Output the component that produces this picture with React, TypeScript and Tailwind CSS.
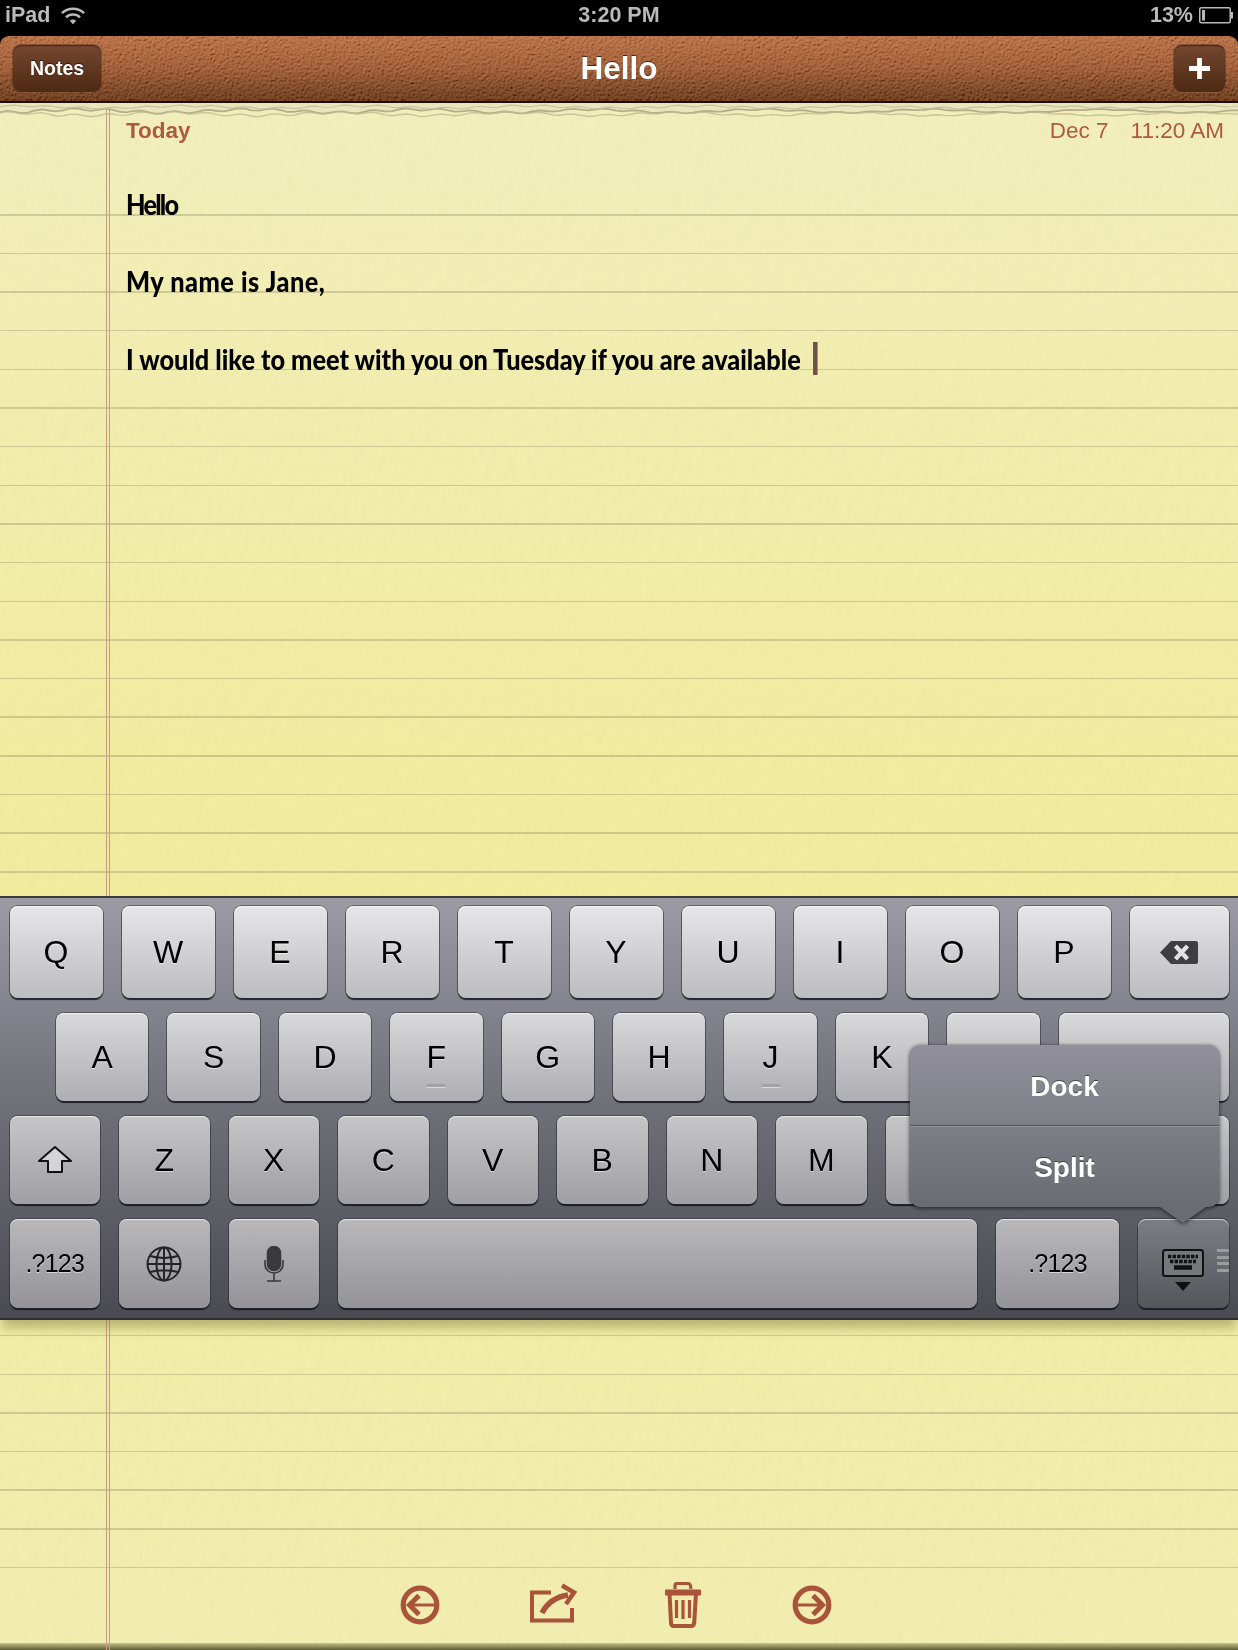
const keyTones = {
  first: "bg-gradient-to-b from-[#e6e6e8] to-[#bcbcc1]",
  second: "bg-gradient-to-b from-[#d9d9db] to-[#aeaeb3]",
  third: "bg-gradient-to-b from-[#c6c6c8] to-[#9f9fa4]",
  fourth: "bg-gradient-to-b from-[#b9b9bc] to-[#939398]",
  active: "bg-gradient-to-b from-[#7d7d85] to-[#55565c]",
};

type Tone = keyof typeof keyTones;

function Key({
  tone,
  className = "",
  children,
}: {
  tone: Tone;
  className?: string;
  children?: React.ReactNode;
}) {
  return (
    <div
      className={`relative flex items-center justify-center rounded-[8px] text-black [text-shadow:0_1px_0_rgba(255,255,255,0.55)] shadow-[inset_0_1px_0_rgba(255,255,255,0.65),0_0_0_1px_rgba(40,40,50,0.5),0_2px_1px_rgba(15,15,25,0.85)] ${keyTones[tone]} ${className}`}
    >
      {children}
    </div>
  );
}

function Bump() {
  return <span className="absolute bottom-[13px] left-1/2 h-[4px] w-[19px] -translate-x-1/2 border-b border-b-white/60 bg-[#a3a3a7]" />;
}

// paper edge under the cover, a wobbly line is enough
function tornLine(offset: number, amp: number) {
  let d = `M0 ${offset}`;
  for (let x = 0; x <= 1245; x += 7) {
    const y = offset + Math.sin(x * 0.037 + offset) * amp + Math.sin(x * 0.19 + offset * 2) * amp * 0.6 + Math.sin(x * 0.71) * amp * 0.3;
    d += ` L${x} ${y.toFixed(1)}`;
  }
  return d;
}

function LeatherTexture() {
  return (
    <svg className="pointer-events-none absolute inset-0 h-full w-full opacity-60 mix-blend-soft-light" aria-hidden="true">
      <filter id="leather" x="0" y="0" width="100%" height="100%">
        <feTurbulence type="fractalNoise" baseFrequency="0.42" numOctaves="3" seed="4" />
        <feDiffuseLighting surfaceScale="1.6" lightingColor="#ffffff">
          <feDistantLight azimuth="60" elevation="30" />
        </feDiffuseLighting>
      </filter>
      <rect width="100%" height="100%" filter="url(#leather)" />
    </svg>
  );
}

function PaperTexture() {
  return (
    <svg className="pointer-events-none absolute inset-0 h-full w-full opacity-[0.18] mix-blend-multiply" aria-hidden="true">
      <filter id="paper" x="0" y="0" width="100%" height="100%">
        <feTurbulence type="fractalNoise" baseFrequency="0.09" numOctaves="4" seed="9" />
        <feDiffuseLighting surfaceScale="0.8" lightingColor="#ffffff">
          <feDistantLight azimuth="45" elevation="62" />
        </feDiffuseLighting>
      </filter>
      <rect width="100%" height="100%" filter="url(#paper)" />
    </svg>
  );
}

function StatusBar() {
  return (
    <div className="flex h-[36px] shrink-0 items-start justify-between bg-black px-[5px] pt-[3px] text-[21.5px] leading-[25px] font-bold text-[#b9b9b9]">
      <div className="flex w-[300px] items-center gap-[11px]">
        <span>iPad</span>
        <svg width="24" height="19" viewBox="0 0 26 20" fill="none" stroke="#b9b9b9" strokeWidth="2.8">
          <path d="M1 7.5C7.5 1 18.5 1 25 7.5" />
          <path d="M5.5 12C9.5 8 16.5 8 20.5 12" />
          <path d="M13 19.5L9.5 15.8C11.5 14 14.5 14 16.5 15.8Z" fill="#b9b9b9" stroke="none" />
        </svg>
      </div>
      <span>3:20 PM</span>
      <div className="flex w-[300px] items-center justify-end gap-[6px]">
        <span>13%</span>
        <svg width="34" height="17" viewBox="0 0 34 17" fill="none">
          <rect x="0.75" y="0.75" width="30.5" height="15" rx="1.5" stroke="#b9b9b9" strokeWidth="1.5" />
          <rect x="3" y="3" width="3" height="10.5" fill="#b9b9b9" />
          <rect x="32" y="5" width="2" height="6.5" fill="#b9b9b9" />
        </svg>
      </div>
    </div>
  );
}

function CoverButton({ children, className = "" }: { children: React.ReactNode; className?: string }) {
  return (
    <div
      className={`relative z-10 flex h-[47px] items-center justify-center rounded-[8px] bg-gradient-to-b from-[#744730] to-[#4e2913] text-white shadow-[inset_0_1px_1px_rgba(0,0,0,0.45),0_1px_0_rgba(255,200,150,0.2),0_0_0_1px_rgba(60,30,15,0.35)] ${className}`}
    >
      {children}
    </div>
  );
}

function Header() {
  return (
    <div className="relative grid h-[67px] shrink-0 grid-cols-[1fr_auto_1fr] items-center overflow-hidden rounded-t-[9px] border-b-2 border-[#1e0f06] bg-gradient-to-b from-[#b0643a] via-[#95502b] to-[#5f3016] px-[13px]">
      <LeatherTexture />
      <CoverButton className="w-[88px] text-[19.5px] font-bold [text-shadow:0_-1px_0_rgba(0,0,0,0.6)]">Notes</CoverButton>
      <span className="relative z-10 text-[31.5px] font-bold text-white [text-shadow:0_-1px_0_rgba(0,0,0,0.6)]">Hello</span>
      <CoverButton className="w-[51px] justify-self-end">
        <svg width="21" height="21" viewBox="0 0 22 22" fill="#fff">
          <path d="M8.5 0h5v8.5H22v5h-8.5V22h-5v-8.5H0v-5h8.5z" />
        </svg>
      </CoverButton>
    </div>
  );
}

function Note() {
  return (
    <div className="relative h-[793px] shrink-0 pl-[126px] pr-[14px]">
      <svg className="absolute left-0 top-0 h-[17px] w-full blur-[0.5px]" viewBox="0 0 1238 17" preserveAspectRatio="none" fill="none" aria-hidden="true">
        <path d={`${tornLine(8, 1.6)} L1245 0 L0 0 Z`} fill="#e9e5bc" />
        <path d={tornLine(8, 1.6)} stroke="#aaa47f" strokeWidth="1.8" opacity="0.85" />
        <path d={tornLine(11, 1.5)} stroke="#bfb994" strokeWidth="1.4" opacity="0.8" />
        <path d={tornLine(4, 1.1)} stroke="#c9c49f" strokeWidth="1.2" />
      </svg>
      <div className="relative flex h-[55px] items-start justify-between pt-[14px] text-[22.5px] leading-[28px] text-[#ad5a40]">
        <span className="font-bold">Today</span>
        <span className="flex gap-[22px]">
          <span>Dec 7</span>
          <span>11:20 AM</span>
        </span>
      </div>
      <div className="relative origin-left scale-x-[0.904] pt-[27px] font-['Lato',sans-serif] text-[28px] leading-[38.65px] font-black text-black [&>p]:mb-[38.65px] [&>p]:whitespace-nowrap">
        <p className="tracking-[-2px]">Hello</p>
        <p className="tracking-[0.55px]">My name is Jane,</p>
        <p className="flex items-center">
          I would like to meet with you on Tuesday if you are available
          <span className="ml-[14px] inline-block h-[33px] w-[5px] bg-[#6d5249]" />
        </p>
      </div>
    </div>
  );
}

function Keyboard() {
  const rowOne = ["Q", "W", "E", "R", "T", "Y", "U", "I", "O", "P"];
  const rowTwo = ["A", "S", "D", "F", "G", "H", "J", "K", "L"];
  const rowThree = ["Z", "X", "C", "V", "B", "N", "M"];

  return (
    <div className="relative flex h-[424px] shrink-0 flex-col gap-[15px] border-t-2 border-t-[#3c3d3a] bg-gradient-to-b from-[#9b9aa5] via-[#6f6f78] to-[#494a52] pt-[8px] text-[32px] shadow-[0_10px_10px_-2px_rgba(105,105,45,0.42),inset_0_-2px_0_rgba(30,30,35,0.6)]">
      <div className="flex gap-[19px] pl-[9.5px] pr-[9px]">
        {rowOne.map((k) => (
          <Key key={k} tone="first" className="h-[92px] w-[93px]">{k}</Key>
        ))}
        <Key tone="first" className="h-[92px] flex-1">
          <svg width="38" height="23" viewBox="0 0 38 23">
            <path d="M11 0h25a2 2 0 0 1 2 2v19a2 2 0 0 1-2 2H11L0 11.5z" fill="#3f3f42" />
            <path d="M15.5 5l12 13M27.5 5l-12 13" stroke="#e2e2e4" strokeWidth="4.2" />
          </svg>
        </Key>
      </div>
      <div className="flex gap-[19px] pl-[56px] pr-[9px]">
        {rowTwo.map((k) => (
          <Key key={k} tone="second" className="h-[88px] w-[92.4px]">
            {k}
            {(k === "F" || k === "J") && <Bump />}
          </Key>
        ))}
        <Key tone="second" className="h-[88px] flex-1" />
      </div>
      <div className="flex gap-[19px] pl-[9.5px] pr-[9px]">
        <Key tone="third" className="h-[88px] w-[90.5px]">
          <svg width="36" height="30" viewBox="0 0 36 30" fill="none" stroke="#111" strokeWidth="2" strokeLinejoin="round">
            <path d="M18 2L2 16h9v11h14V16h9z" fill="#d4d4d6" />
          </svg>
        </Key>
        {rowThree.map((k) => (
          <Key key={k} tone="third" className="h-[88px] w-[90.5px]">{k}</Key>
        ))}
        {/* these two sit fully under the popover */}
        <Key tone="third" className="h-[88px] w-[90.5px]" />
        <Key tone="third" className="h-[88px] w-[90.5px]" />
        <Key tone="third" className="h-[88px] flex-1" />
      </div>
      <div className="flex gap-[19px] pl-[9.5px] pr-[9px]">
        <Key tone="fourth" className="h-[89px] w-[90.5px] text-[25px] tracking-[-0.8px]">.?123</Key>
        <Key tone="fourth" className="h-[89px] w-[90.5px]">
          <svg width="36" height="36" viewBox="0 0 36 36" fill="none" stroke="#252527" strokeWidth="2">
            <circle cx="18" cy="18" r="16.5" />
            <ellipse cx="18" cy="18" rx="7.5" ry="16.5" />
            <path d="M18 1.5v33M1.5 18h33M4 10c8 2.5 20 2.5 28 0M4 26c8-2.5 20-2.5 28 0" />
          </svg>
        </Key>
        <Key tone="fourth" className="h-[89px] w-[90.5px]">
          <svg width="20" height="36" viewBox="0 0 20 36" fill="none" stroke="#3a3a3d" strokeWidth="1.6">
            <rect x="3.5" y="0.5" width="13" height="24" rx="6.5" fill="#3a3a3d" />
            <path d="M1 14v4c0 12 18 12 18 0v-4M10 27v8M3 35h14" />
          </svg>
        </Key>
        <Key tone="fourth" className="h-[89px] w-[639px]" />
        <Key tone="fourth" className="h-[89px] w-[123px] text-[25px] tracking-[-0.8px]">.?123</Key>
        <Key tone="active" className="h-[89px] flex-1">
          <svg className="-ml-[1px] mt-[14px]" width="42" height="44" viewBox="0 0 42 44" fill="none">
            <rect x="1" y="1" width="40" height="26" rx="2.5" stroke="#111" strokeWidth="2" fill="#77777e" />
            <path d="M6 7.5h30" stroke="#111" strokeWidth="3.5" strokeDasharray="3.4 1.2" />
            <path d="M8 12.5h26" stroke="#111" strokeWidth="3.5" strokeDasharray="3.4 1.2" />
            <path d="M12 18.5h18" stroke="#111" strokeWidth="4.5" />
            <path d="M13 33h16l-8 9z" fill="#111" />
          </svg>
          <span className="absolute right-0 top-[30px] flex w-[12px] flex-col gap-[3.5px]">
            <span className="h-[3px] bg-[#9b9ba0]" />
            <span className="h-[3px] bg-[#9b9ba0]" />
            <span className="h-[3px] bg-[#9b9ba0]" />
            <span className="h-[3px] bg-[#9b9ba0]" />
          </span>
        </Key>
      </div>

      <div className="absolute left-[910px] top-[147px] flex h-[162px] w-[309px] flex-col rounded-[10px] bg-gradient-to-b from-[#92919b] to-[#6a6b73] text-[28px] font-bold text-white drop-shadow-[0_1px_2px_rgba(15,15,20,0.8)] [text-shadow:0_-1px_0_rgba(40,40,45,0.7)]">
        <div className="absolute left-[250px] top-full h-[16px] w-[46px] bg-[#6a6b73] [clip-path:polygon(0_0,100%_0,50%_100%)]" />
        <div className="relative flex h-[81px] items-center justify-center border-b border-b-[#55555d] pt-[4px] shadow-[0_1px_0_rgba(255,255,255,0.18)]">Dock</div>
        <div className="relative flex flex-1 items-center justify-center pt-[3px]">Split</div>
      </div>
    </div>
  );
}

function Toolbar() {
  const brick = "#a9533b";
  return (
    <div className="relative mt-auto flex h-[58px] items-start pl-[400px]">
      <svg width="40" height="40" viewBox="0 0 40 40" fill="none" stroke={brick}>
        <circle cx="20" cy="20" r="16.8" strokeWidth="5.2" />
        <path d="M19 10.5L9.5 20l9.5 9.5" strokeWidth="5" />
        <path d="M11 20h24" strokeWidth="3" />
      </svg>
      <svg className="-mt-[2px] ml-[90px]" width="48" height="40" viewBox="0 0 48 40" fill="none" stroke={brick}>
        <path d="M21 9.5H2v28h40V25" strokeWidth="4" />
        <path d="M12 30C17 20 25 14 38 12" strokeWidth="5.5" />
        <path d="M32 2.5L44 9.5 36 21" strokeWidth="4.5" />
      </svg>
      <svg className="-mt-[3px] ml-[87px]" width="36" height="46" viewBox="0 0 36 46" fill="none" stroke={brick}>
        <path d="M10 7V3.5C10 2 11 1.5 12.5 1.5h10C24 1.5 25 2 25.5 3.5L26 7" strokeWidth="3.2" />
        <path d="M1.5 10.5h33" strokeWidth="6" strokeLinecap="round" />
        <path d="M4.5 11l1.5 30c0 2 1 3 3 3h17c2 0 3-1 3.2-3L31 11" strokeWidth="4" />
        <path d="M11.5 18v18M18 18v19M24.5 18v18" strokeWidth="3.2" />
      </svg>
      <svg className="ml-[91px]" width="40" height="40" viewBox="0 0 40 40" fill="none" stroke={brick}>
        <circle cx="20" cy="20" r="16.8" strokeWidth="5.2" />
        <path d="M21 10.5l9.5 9.5-9.5 9.5" strokeWidth="5" />
        <path d="M5 20h24" strokeWidth="3" />
      </svg>
    </div>
  );
}

export default function App() {
  return (
    <div className="flex h-[1650px] w-[1238px] flex-col overflow-hidden bg-black font-['Liberation_Sans',Arial,sans-serif]">
      <StatusBar />
      <Header />
      <div className="relative flex flex-1 flex-col bg-[#f3efb4] bg-[linear-gradient(to_bottom,#f3f0bd_0%,#f3ed9f_45%,#f3ed9f_60%,#f3efb2_100%)]">
        <PaperTexture />
        <div className="pointer-events-none absolute inset-x-0 bottom-[80px] top-0 bg-[repeating-linear-gradient(to_bottom,rgba(125,115,90,0.3)_0,rgba(125,115,90,0.3)_1.5px,transparent_1.5px,transparent_38.65px)] bg-[position:0_111px] bg-no-repeat" />
        <div className="pointer-events-none absolute bottom-0 left-[106px] top-0 w-[4px] border-x border-x-[#cc9a84]" />
        <Note />
        <Keyboard />
        <Toolbar />
        <div className="h-[7px] bg-gradient-to-b from-[#c9c78f] to-[#5d5d2f]" />
      </div>
    </div>
  );
}
